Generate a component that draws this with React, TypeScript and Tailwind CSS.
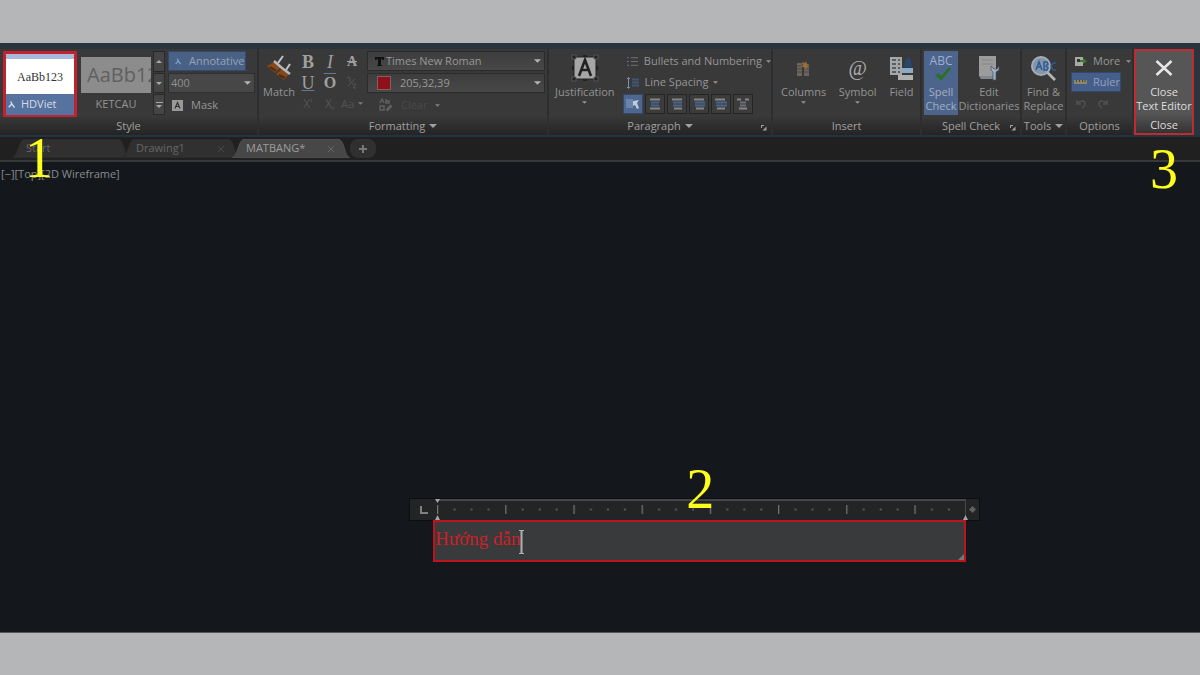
/**
 * Text editor workspace - ribbon, drawing tabs and the in-place text box
 */
import type { ReactNode } from 'react';

interface PanelProps {
  title: string;
  menu?: boolean;
  launcher?: boolean;
  children: ReactNode;
}

interface BigButtonProps {
  icon: ReactNode;
  lines: string[];
  menu?: boolean;
  className?: string;
}

function Caret({ className = 'w-2 h-1' }: { className?: string }) {
  return (
    <svg className={`shrink-0 ${className}`} viewBox="0 0 8 4" fill="currentColor" aria-hidden="true">
      <path d="M0 0h8L4 4z" />
    </svg>
  );
}

function Panel({ title, menu, launcher, children }: PanelProps) {
  return (
    <section className="min-w-0 flex flex-col border-r-2 border-[#2c2e30] bg-[#393939]">
      <div className="h-[68px] pt-0.5 flex items-start">{children}</div>
      <div className="relative flex-1 flex items-center justify-center gap-1 bg-gradient-to-b from-[#383838] to-[#242424] text-[#a0a0a0]">
        <span className="whitespace-nowrap">{title}</span>
        {menu && <Caret />}
        {launcher && (
          <button aria-label={`${title} settings`} className="absolute right-1 bottom-1 text-[#a0a0a0]">
            <svg className="w-[6px] h-[6px]" viewBox="0 0 6 6" aria-hidden="true">
              <path d="M0 0h3v1H1v2H0zM5.500 1.500v4h-4z" fill="currentColor" />
            </svg>
          </button>
        )}
      </div>
    </section>
  );
}

function BigButton({ icon, lines, menu, className = 'text-[#949494]' }: BigButtonProps) {
  return (
    <button className={`h-16 shrink-0 flex flex-col items-center ${className}`}>
      <span className="h-[34px] flex items-center justify-center">{icon}</span>
      {lines.map((line) => (
        <span key={line} className="leading-[14px] whitespace-nowrap">{line}</span>
      ))}
      {menu && <Caret className="w-[5px] h-[3px] mt-0.5" />}
    </button>
  );
}

function PersonMark({ className }: { className: string }) {
  return (
    <svg className={className} viewBox="0 0 8 8" fill="none" stroke="currentColor" strokeWidth="1.6" aria-hidden="true">
      <path d="M3 0.5L4.4 3.4L7.5 7.5M4.4 3.4L0.8 7.2" />
    </svg>
  );
}

function StylePanel() {
  return (
    <Panel title="Style">
      <button className="ml-[3px] w-[74px] h-[67px] shrink-0 border-[3px] border-[#c4212f] bg-[#56729f] text-[#d5dbe6] flex flex-col">
        <span className="h-[5px] w-full bg-[#a9b9dc]" />
        <span className="h-[35px] w-full bg-white text-[#333] flex items-center justify-center font-['Liberation_Serif',serif] text-xs">
          AaBb123
        </span>
        <span className="flex-1 w-full flex items-center gap-1.5 pl-0.5">
          <PersonMark className="w-[7px] h-[7px]" />
          HDViet
        </span>
      </button>
      <button className="ml-1 w-[70px] h-16 shrink-0 flex flex-col text-[#929292]">
        <span className="mt-1.5 h-9 w-full bg-[#8c8c8c] text-[#606060] overflow-hidden flex items-center pl-1.5 font-['Open_Sans',sans-serif] text-xl">
          AaBb12
        </span>
        <span className="flex-1 w-full flex items-center justify-center">KETCAU</span>
      </button>
      <div className="ml-0.5 w-3 h-16 shrink-0 flex flex-col gap-px text-[#a8a8a8]">
        <button aria-label="Previous styles" className="flex-1 border border-[#292929] bg-[#454545] flex items-center justify-center">
          <Caret className="w-[6px] h-[3px] rotate-180" />
        </button>
        <button aria-label="Next styles" className="flex-1 border border-[#292929] bg-[#454545] flex items-center justify-center">
          <Caret className="w-[6px] h-[3px]" />
        </button>
        <button aria-label="All styles" className="flex-1 border border-[#292929] bg-[#454545] flex flex-col gap-0.5 items-center justify-center">
          <span className="w-[7px] h-px bg-current" />
          <Caret className="w-[6px] h-[3px]" />
        </button>
      </div>
      <div className="ml-[3px] mr-0.5 flex-1 min-w-0 flex flex-col gap-0.5">
        <button aria-pressed="true" className="w-[78px] h-5 flex items-center gap-2 pl-1.5 border border-[#34486a] bg-[#4a6186] text-[#95a3ba]">
          <PersonMark className="w-[6px] h-[7px] text-[#7dabd8]" />
          Annotative
        </button>
        <div className="relative h-5">
          <select aria-label="Text height" className="w-full h-full appearance-none pl-0.5 border border-[#2f2f2f] bg-[#474747] text-[#909090] leading-4">
            <option>400</option>
          </select>
          <Caret className="absolute right-1 top-2 w-[7px] h-1 text-[#b4b4b4] pointer-events-none" />
        </div>
        <button className="h-5 flex items-center gap-2 pl-1 text-[#969696]">
          <svg className="w-[11px] h-[11px]" viewBox="0 0 11 11" aria-hidden="true">
            <path d="M0 0h11v11H0z" fill="#999" />
            <path d="M3 8.5L5.5 2.5L8 8.5M4 6.5h3" fill="none" stroke="#333" strokeWidth="1.2" />
          </svg>
          Mask
        </button>
      </div>
    </Panel>
  );
}

function FormattingPanel() {
  return (
    <Panel title="Formatting" menu>
      <BigButton
        className="ml-1 text-[#949494]"
        lines={['Match']}
        icon={
          <svg className="w-[26px] h-[28px]" viewBox="0 0 26 28" aria-hidden="true">
            <path d="M1 12l7-4 7 5-6 6z" fill="#85481a" />
            <path d="M10 20l6-5 7 5-5 6z" fill="#85481a" />
            <path d="M4 13l6 4M13 21l6 3" stroke="#4d2a10" strokeWidth="2" />
            <path d="M8 7l8 7M16 14l8 6" stroke="#b8b8b8" strokeWidth="2.5" />
            <path d="M12 9l5-7M20 16l4-6" stroke="#c4c4c4" strokeWidth="2" />
          </svg>
        }
      />
      <div className="ml-0.5 w-[66px] shrink-0 grid grid-cols-3 auto-rows-[21px] text-[#a0a0a0] font-['Liberation_Serif',serif] text-lg">
        <button aria-label="Bold" className="leading-none font-bold">B</button>
        <button aria-label="Italic" className="leading-none italic">I</button>
        <button aria-label="Strikethrough" className="leading-none text-sm line-through font-bold">A</button>
        <button aria-label="Underline" className="leading-none underline decoration-[#61779a]">U</button>
        <button aria-label="Overline" className="leading-none font-bold overline decoration-[#61779a] text-base">O</button>
        <button aria-label="Stack" className="flex items-center justify-center text-[#555]">
          <svg className="w-[11px] h-[13px]" viewBox="0 0 11 13" fill="none" stroke="currentColor" aria-hidden="true">
            <path d="M1 1l3 1v4M2 10l7-7M6 8h4l-3 4h3" />
          </svg>
        </button>
        <button aria-label="Superscript" className="leading-none text-xs text-[#535353] font-['Open_Sans',sans-serif]">X'</button>
        <button aria-label="Subscript" className="leading-none text-xs text-[#535353] font-['Open_Sans',sans-serif]">X,</button>
        <button aria-label="Change case" className="flex items-center gap-1 text-[11px] text-[#535353] font-['Open_Sans',sans-serif]">
          Aa
          <Caret className="w-[5px] h-[3px] text-[#808080]" />
        </button>
      </div>
      <div className="ml-1 mr-0.5 flex-1 min-w-0 flex flex-col gap-0.5">
        <div className="relative h-5">
          <select aria-label="Font" className="w-full h-full appearance-none pl-[18px] border border-[#2b2b2b] bg-gradient-to-b from-[#3d3d3d] to-[#484848] text-[#989898] leading-4">
            <option>Times New Roman</option>
          </select>
          <svg className="absolute left-2 top-1.5 w-[9px] h-[9px] pointer-events-none" viewBox="0 0 9 9" aria-hidden="true">
            <path d="M0 0h9v3H8L6 1.500V8h1v1H2V8h1V1.500L1 3H0z" fill="#101010" />
          </svg>
          <Caret className="absolute right-1 top-2 w-[7px] h-1 text-[#b4b4b4] pointer-events-none" />
        </div>
        <div className="relative h-5">
          <select aria-label="Text colour" className="w-full h-full appearance-none pl-8 border border-[#2b2b2b] bg-gradient-to-b from-[#3d3d3d] to-[#484848] text-[#989898] leading-4">
            <option>205,32,39</option>
          </select>
          <span className="absolute left-2.5 top-[3px] w-3.5 h-3.5 border border-[#8a5a5a] bg-[#8e1119] pointer-events-none" />
          <Caret className="absolute right-1 top-2 w-[7px] h-1 text-[#b4b4b4] pointer-events-none" />
        </div>
        <button className="h-5 flex items-center gap-2 pl-3 text-[#494949]">
          <svg className="w-[14px] h-[14px]" viewBox="0 0 14 14" fill="none" stroke="#606060" strokeWidth="1.5" aria-hidden="true">
            <path d="M1 5l2-4 2 4M7 1v4h3V3H7M1 8h4v4H1zM7 12l5-5M8 13l5-5" />
          </svg>
          Clear
          <Caret className="w-[5px] h-[3px] text-[#808080]" />
        </button>
      </div>
    </Panel>
  );
}

const alignments = [
  { name: 'Align left', path: 'M2 2h10M2 11h10', mid: 'M3 5h8M3 8h8' },
  { name: 'Align centre', path: 'M2 2h10M4 11h8', mid: 'M3 5h9M3 8h9' },
  { name: 'Align right', path: 'M2 2h10M4 11h8', mid: 'M3 5h10M3 8h10' },
  { name: 'Justify', path: 'M1 2h10M3 11h8', mid: 'M2 5h11M2 8h11' },
  { name: 'Distribute', path: 'M1 2h4M9 2h4M3 11h8', mid: 'M4 5h6M4 8h6' },
];

function ParagraphPanel() {
  return (
    <Panel title="Paragraph" menu launcher>
      <BigButton
        className="ml-1.5 text-[#949494]"
        lines={['Justification']}
        menu
        icon={
          <svg className="w-[28px] h-[28px]" viewBox="0 0 28 28" aria-hidden="true">
            <path d="M3 3h22v22H3z" fill="#a6a6a6" stroke="#222" />
            <path d="M8 22L14 6L20 22M10 16h8" fill="none" stroke="#222" strokeWidth="2.6" />
            <path d="M1 1h4v4H1zM23 1h4v4h-4zM1 23h4v4H1zM23 23h4v4h-4z" fill="#222" stroke="#665e5c" strokeWidth="0.8" />
            <path d="M12 2h4M12 26h4M2 12v4M26 12v4" stroke="#222" strokeWidth="2" />
          </svg>
        }
      />
      <div className="ml-2 flex-1 min-w-0 flex flex-col text-[#969696]">
        <button className="h-[21px] flex items-center gap-1 pl-1 whitespace-nowrap">
          <svg className="w-3 h-3 mr-0.5" viewBox="0 0 12 12" stroke="#737373" aria-hidden="true">
            <path d="M4 1.5h8M4 5.5h8M4 9.5h8" />
            <path d="M0 1.5h2M0 5.5h2M0 9.5h2" stroke="#63799b" />
          </svg>
          Bullets and Numbering
          <Caret className="w-[5px] h-[3px]" />
        </button>
        <button className="h-[21px] flex items-center gap-1 pl-1 whitespace-nowrap">
          <svg className="w-3 h-3 mr-0.5" viewBox="0 0 12 12" fill="none" aria-hidden="true">
            <path d="M0 2l1.5-1.5L3 2M1.5 1v10M0 10l1.500 1.500L3 10" stroke="#7790b4" />
            <path d="M5 2.500h7M5 5.500h7M5 8.500h7" stroke="#41587c" strokeWidth="2" />
          </svg>
          Line Spacing
          <Caret className="w-[5px] h-[3px]" />
        </button>
        <div className="h-[21px] pt-px flex gap-0.5">
          <button aria-label="Default alignment" aria-pressed="true" className="w-5 h-5 border border-[#34486a] bg-[#4d678f] flex items-center justify-center">
            <svg className="w-4 h-3" viewBox="0 0 16 12" aria-hidden="true">
              <path d="M1 1h7v9H1z" fill="#6b83aa" />
              <path d="M8 3l6-1-2 3 2 5-2 1-2-4-2 1z" fill="#c0cad9" />
            </svg>
          </button>
          {alignments.map((item) => (
            <button key={item.name} aria-label={item.name} className="w-5 h-5 border border-[#252525] bg-[#3c3c3c] flex items-center justify-center">
              <svg className="w-3.5 h-3.5" viewBox="0 0 14 13" strokeWidth="2" aria-hidden="true">
                <path d={item.path} stroke="#858585" />
                <path d={item.mid} stroke={item.name === 'Distribute' ? '#68707c' : '#49648f'} />
              </svg>
            </button>
          ))}
        </div>
      </div>
    </Panel>
  );
}

function InsertPanel() {
  return (
    <Panel title="Insert">
      <div className="flex-1 flex justify-between pl-2 pr-1.5">
        <BigButton
          lines={['Columns']}
          menu
          icon={
            <svg className="w-[15px] h-[17px]" viewBox="0 0 15 17" aria-hidden="true">
              <path d="M1 3h5v13H1zM8 6h5v10H8z" fill="#6b655e" />
              <path d="M1 6h5M1 9h5M1 12h5M8 9h5M8 12h5" stroke="#4b4845" />
              <path d="M10 1l1 3 3 1-3 1-1 4-2-3-3 0 2-2-1-3 3 1z" fill="#9b6c38" />
            </svg>
          }
        />
        <BigButton
          lines={['Symbol']}
          menu
          icon={<span className="font-['Liberation_Serif',serif] text-xl text-[#b0b0b0]">@</span>}
        />
        <BigButton
          lines={['Field']}
          icon={
            <svg className="w-[25px] h-[25px]" viewBox="0 0 25 25" aria-hidden="true">
              <path d="M1 1h12v18H1z" fill="#a5a8ab" />
              <path d="M3 4h4M3 8h4M3 12h4M3 16h4M9 4h2M9 8h2M9 12h2M9 16h2" stroke="#444" strokeWidth="1.6" />
              <path d="M15 11l2-8 4-2 2 10z" fill="#2a4670" />
              <path d="M13 12h11v5H13z" fill="#8babc8" />
              <path d="M9 19h15v5H9z" fill="#b0b0b0" />
            </svg>
          }
        />
      </div>
    </Panel>
  );
}

function SpellPanel() {
  return (
    <Panel title="Spell Check" launcher>
      <BigButton
        className="ml-0.5 w-[34px] bg-[#4d658c] text-[#a3afc2]"
        lines={['Spell', 'Check']}
        icon={
          <span className="relative h-[32px] text-xs leading-[18px] text-[#9cb0cd]">
            ABC
            <svg className="absolute left-1 top-3.5 w-[18px] h-[16px]" viewBox="0 0 18 16" aria-hidden="true">
              <path d="M1 9l4-2 2 3L15 1l2 2L7 15z" fill="#2b6f30" />
            </svg>
          </span>
        }
      />
      <div className="flex-1 min-w-0 flex justify-center">
        <BigButton
          lines={['Edit', 'Dictionaries']}
          icon={
            <svg className="w-[22px] h-[26px]" viewBox="0 0 22 26" aria-hidden="true">
              <path d="M1 1h17v20H1z" fill="#9c9c9c" />
              <path d="M1 21h15v3H3z" fill="#808890" />
              <path d="M4 5h11M4 9h11" stroke="#858585" />
              <path d="M13 11v4l2 2v8h3v-8l3-2v-4l-2 3h-3z" fill="#9eb0c5" stroke="#44505e" strokeWidth="0.700" />
            </svg>
          }
        />
      </div>
    </Panel>
  );
}

function ToolsPanel() {
  return (
    <Panel title="Tools" menu>
      <div className="flex-1 flex justify-center">
        <BigButton
          lines={['Find &', 'Replace']}
          icon={
            <svg className="w-[27px] h-[27px]" viewBox="0 0 27 27" aria-hidden="true">
              <path d="M17 17l8 8" stroke="#b6b6b6" strokeWidth="2.6" />
              <circle cx="11" cy="11" r="9" fill="#8295a9" stroke="#a4acb5" strokeWidth="2" />
              <path d="M6 15L9 7L12 15M7 12h4M14 7v8h3l1-2-2-2 2-2-1-2zM26 8h-3l-2 3 2 4h3" fill="none" stroke="#2c5a96" strokeWidth="1.500" />
            </svg>
          }
        />
      </div>
    </Panel>
  );
}

function OptionsPanel() {
  return (
    <Panel title="Options">
      <div className="flex-1 min-w-0 flex flex-col pl-1 text-[#969696]">
        <button className="h-[21px] flex items-center gap-1.5 pl-1">
          <svg className="w-[12px] h-[11px]" viewBox="0 0 12 11" aria-hidden="true">
            <path d="M0 1h8v9H0z" fill="#a8a8a8" />
            <path d="M2 3h3v3H2z" fill="#333" />
            <path d="M5 4h3V2l4 3-4 3V6H5z" fill="#3d7a2c" />
          </svg>
          More
          <Caret className="w-[5px] h-[3px]" />
        </button>
        <button aria-pressed="true" className="w-[50px] h-5 flex items-center gap-1.5 pl-0.5 border border-[#34486a] bg-[#465f8a] text-[#93a1ba]">
          <svg className="w-[13px] h-1 shrink-0" viewBox="0 0 13 4" aria-hidden="true">
            <path d="M0 0h13v4H0z" fill="#8c8768" />
            <path d="M2.500 0v2M5.500 0v2M8.500 0v2M11 0v2" stroke="#4d4a38" />
          </svg>
          Ruler
        </button>
        <div className="h-[23px] flex items-center gap-2.5 pl-1 text-[#505050]">
          <button aria-label="Undo">
            <svg className="w-3 h-2.5" viewBox="0 0 12 10" fill="none" stroke="currentColor" strokeWidth="1.500" aria-hidden="true">
              <path d="M2 1v4h4M2 5c3-4 8-4 8 0 0 2-2 3-3 4" />
            </svg>
          </button>
          <button aria-label="Redo">
            <svg className="w-3 h-2.5" viewBox="0 0 12 10" fill="none" stroke="currentColor" strokeWidth="1.500" aria-hidden="true">
              <path d="M10 1v4H6M10 5C7 1 2 1 2 5c0 2 2 3 3 4" />
            </svg>
          </button>
        </div>
      </div>
    </Panel>
  );
}

function ClosePanel() {
  return (
    <section className="relative min-w-0 h-[86px] border-2 border-[#c02a33] bg-[#565656] text-[#dedede]">
      <button className="w-full h-full flex flex-col items-center">
        <span className="h-[34px] flex items-center">
          <svg className="w-[18px] h-[16px]" viewBox="0 0 18 16" stroke="#e8e8e8" strokeWidth="2.500" aria-hidden="true">
            <path d="M1.500 1l15 14M16.500 1l-15 14" />
          </svg>
        </span>
        <span className="leading-[14px]">Close</span>
        <span className="leading-[14px] whitespace-nowrap">Text Editor</span>
        <span className="flex-1 w-full flex items-end justify-center leading-4 bg-gradient-to-b from-[#565656] to-[#333]">Close</span>
      </button>
      <Callout className="left-[14px] top-[90px]">3</Callout>
    </section>
  );
}

function Callout({ className, children }: { className: string; children: ReactNode }) {
  return (
    <span className={`absolute z-10 font-['Liberation_Serif',serif] text-[56px] leading-none text-[#ffff1e] pointer-events-none ${className}`}>
      {children}
    </span>
  );
}

function DrawingTab({ name, active, closable }: { name: string; active?: boolean; closable?: boolean }) {
  return (
    <div className={`relative -mr-2 w-[118px] h-full flex items-center pl-3.5 pr-4 ${active ? 'z-10 text-[#9c9c9c]' : 'text-[#666]'}`}>
      <svg className="absolute inset-0 w-full h-full" viewBox="0 0 118 21" preserveAspectRatio="none" aria-hidden="true">
        <path
          d="M0 21C6 19 6 2 12 0H106C113 1 112 19 118 21z"
          fill={active ? '#474747' : '#303030'}
          stroke={active ? '#505050' : '#292929'}
        />
      </svg>
      <button className="relative">{name}</button>
      {closable && (
        <button aria-label={`Close ${name}`} className={`relative ml-auto ${active ? 'text-[#666]' : 'text-[#484848]'}`}>
          <svg className="w-1.5 h-1.5" viewBox="0 0 6 6" stroke="currentColor" aria-hidden="true">
            <path d="M0 0l6 6M6 0l-6 6" />
          </svg>
        </button>
      )}
    </div>
  );
}

function TextEditor() {
  return (
    <div className="absolute left-[34.1%] top-[336px] w-[47.6%]">
      {/* Ruler */}
      <div className="h-[23px] flex border border-[#0c0e11] bg-[#232425]">
        <button aria-label="Tab stop" className="w-[27px] flex items-center justify-center text-[#808080]">
          <svg className="w-2 h-2" viewBox="0 0 8 8" fill="none" stroke="currentColor" strokeWidth="2" aria-hidden="true">
            <path d="M1 0v7h7" />
          </svg>
        </button>
        <div className="relative flex-1 border-t-2 border-r border-[#454647]">
          <svg className="w-full h-full" aria-hidden="true">
            <defs>
              <pattern id="ticks" width="68.200" height="20" patternUnits="userSpaceOnUse">
                <path d="M0.500 4v9" stroke="#737373" strokeWidth="1.500" />
                <path d="M16.500 8.500h2M33.500 8.500h2M50.500 8.500h2" stroke="#585858" strokeWidth="2" />
              </pattern>
            </defs>
            <rect width="100%" height="100%" fill="url(#ticks)" />
          </svg>
          <svg className="absolute -left-0.5 -top-0.5 w-[5px] h-[21px]" viewBox="0 0 5 21" fill="#a5a5a5" aria-hidden="true">
            <path d="M0 0h5L2.500 4zM0 21h5L2.500 16z" />
          </svg>
          <svg className="absolute -right-[3px] bottom-0 w-[5px] h-[5px]" viewBox="0 0 5 5" fill="#a5a5a5" aria-hidden="true">
            <path d="M0 5h5L2.500 0z" />
          </svg>
        </div>
        <span className="w-[13px] flex items-center justify-center">
          <svg className="w-[7px] h-[7px]" viewBox="0 0 7 7" fill="#606060" aria-hidden="true">
            <path d="M3.500 0L7 3.500L3.500 7L0 3.500z" />
          </svg>
        </span>
      </div>

      {/* Text box */}
      <div className="relative -mt-px ml-6 mr-3.5 border-2 border-[#bd141c] bg-[#393a3b]">
        <input
          aria-label="Text"
          defaultValue="Hướng dẫn"
          className="block w-full h-[38px] pb-1 bg-transparent outline-none font-['Liberation_Serif',serif] text-[19px] text-[#cd2027]"
        />
        <svg className="absolute left-[83px] top-2 w-[7px] h-[24px]" viewBox="0 0 7 24" fill="none" stroke="#b0b0b0" aria-hidden="true">
          <path d="M1 0.500h5M1 23.500h5" />
          <path d="M3.500 0v24" strokeWidth="2" />
        </svg>
        <svg className="absolute right-0 bottom-0 w-1.5 h-1.5" viewBox="0 0 6 6" fill="#777" aria-hidden="true">
          <path d="M6 0v6H0z" />
        </svg>
      </div>

      <Callout className="left-[277px] -top-[37px]">2</Callout>
    </div>
  );
}

function App() {
  return (
    <div className="min-h-screen flex flex-col pt-[43px] pb-[42px] bg-[#b5b6b8] font-['Open_Sans','Noto_Sans',sans-serif] text-[11px]">
      {/* Ribbon */}
      <header className="h-[94px] pt-1.5 border-b-2 border-[#24343f] bg-[#2a343c]">
        <div className="h-[85px] grid grid-cols-[259fr_290fr_224fr_149fr_100fr_45fr_67fr_60fr_6fr]">
          <StylePanel />
          <FormattingPanel />
          <ParagraphPanel />
          <InsertPanel />
          <SpellPanel />
          <ToolsPanel />
          <OptionsPanel />
          <ClosePanel />
        </div>
      </header>

      {/* Drawing tabs */}
      <nav className="relative h-[25px] pt-0.5 pb-0.5 pl-3 flex border-b-2 border-[#37393b] bg-[#202020]">
        <DrawingTab name="Start" />
        <DrawingTab name="Drawing1" closable />
        <DrawingTab name="MATBANG*" active closable />
        <button aria-label="New drawing" className="ml-2 w-[26px] h-full rounded-lg bg-[#303030] text-[#777] flex items-center justify-center">
          <svg className="w-2 h-2" viewBox="0 0 8 8" stroke="currentColor" strokeWidth="2" aria-hidden="true">
            <path d="M4 0v8M0 4h8" />
          </svg>
        </button>
        <Callout className="left-[25px] -top-[7px]">1</Callout>
      </nav>

      {/* Canvas */}
      <main className="relative flex-1 min-h-[400px] border-b border-[#55585b] bg-[#14181c]">
        <div className="pt-1 pl-px flex text-[#8a8d8f]">
          <button>[−]</button>
          <button>[Top]</button>
          <button>[2D Wireframe]</button>
        </div>
        <TextEditor />
      </main>
    </div>
  );
}

export default App;
